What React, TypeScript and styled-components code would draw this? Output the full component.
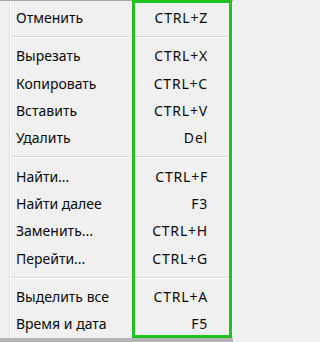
import React from "react";
import styled, { createGlobalStyle } from "styled-components";

type Item = { label: string; keys: string };

const groups: Item[][] = [
  [{ label: "Отменить", keys: "CTRL+Z" }],
  [
    { label: "Вырезать", keys: "CTRL+X" },
    { label: "Копировать", keys: "CTRL+C" },
    { label: "Вставить", keys: "CTRL+V" },
    { label: "Удалить", keys: "Del" },
  ],
  [
    { label: "Найти...", keys: "CTRL+F" },
    { label: "Найти далее", keys: "F3" },
    { label: "Заменить...", keys: "CTRL+H" },
    { label: "Перейти...", keys: "CTRL+G" },
  ],
  [
    { label: "Выделить все", keys: "CTRL+A" },
    { label: "Время и дата", keys: "F5" },
  ],
];

const Global = createGlobalStyle`
  html, body {
    margin: 0;
    padding: 0;
    background: #f0f0f0;
  }
`;

const Frame = styled.div`
  position: relative;
  width: 233px;
  height: 342px;
  background: linear-gradient(#9c9c9c, #b4b4b4);
  font-family: "Noto Sans", "Open Sans", sans-serif;
`;

const Menu = styled.div`
  display: flex;
  height: 337px;
  background: #f0f0f0;
  border-top: 1px solid #a8a8a8;
`;

const Gutter = styled.div`
  width: 9px;
  border-right: 1px solid #e0e0e0;
  box-shadow: 1px 0 0 #ffffff;
`;

const List = styled.div`
  flex: 1;
  padding-top: 3px;
  margin-left: 1px;
`;

const Row = styled.div`
  display: flex;
  align-items: center;
  justify-content: space-between;
  height: 27.3px;
  padding: 0 25px 0 5px;
  font-size: 14px;
  color: #0a0a0a;
`;

const Keys = styled.span`
  text-align: right;
  letter-spacing: 0.8px;
`;

const Separator = styled.div`
  height: 11px;
  display: flex;
  flex-direction: column;
  &::before {
    content: "";
    margin-top: 5px;
    height: 1px;
    background: #d9d9d9;
    border-bottom: 1px solid #ffffff;
  }
`;

// green annotation frame drawn over the shortcut column
const Highlight = styled.div`
  position: absolute;
  left: 132px;
  top: 0;
  width: 100px;
  height: 338px;
  box-sizing: border-box;
  border: 3px solid #1ec31e;
  pointer-events: none;
`;

export default function App() {
  return (
    <Frame>
      <Global />
      <Menu>
        <Gutter />
        <List>
          {groups.map((group, gi) => (
            <React.Fragment key={gi}>
              {gi > 0 && <Separator />}
              {group.map((item) => (
                <Row key={item.label}>
                  <span>{item.label}</span>
                  <Keys>{item.keys}</Keys>
                </Row>
              ))}
            </React.Fragment>
          ))}
        </List>
      </Menu>
      <Highlight />
    </Frame>
  );
}
